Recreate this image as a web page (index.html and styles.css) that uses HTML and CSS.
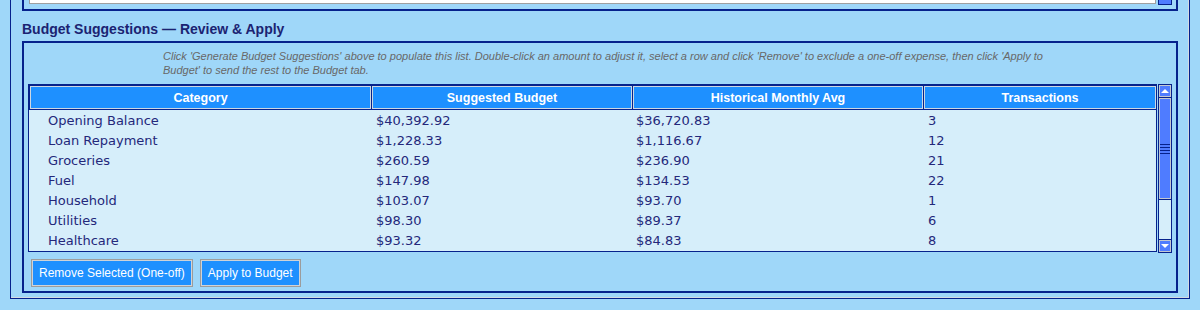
FILE: index.html
```html
<!DOCTYPE html>
<html lang="en">
<head>
  <meta charset="UTF-8">
  <title>Budget Suggestions</title>
  <link rel="stylesheet" href="styles.css">
</head>
<body>

  <div class="panel">
    <div class="prev-group">
      <div class="prev-list"></div>
      <div class="prev-scroll"></div>
    </div>

    <h4 class="group-title">Budget Suggestions — Review &amp; Apply</h4>

    <div class="group">
      <p class="hint">Click 'Generate Budget Suggestions' above to populate this list. Double-click an amount to adjust it, select a row and click 'Remove' to exclude a one-off expense, then click 'Apply to Budget' to send the rest to the Budget tab.</p>

      <div class="tree">
        <div class="tree-body">
          <div class="tree-head">
            <div>Category</div>
            <div>Suggested Budget</div>
            <div>Historical Monthly Avg</div>
            <div>Transactions</div>
          </div>
          <div class="tree-row"><span>Opening Balance</span><span>$40,392.92</span><span>$36,720.83</span><span>3</span></div>
          <div class="tree-row"><span>Loan Repayment</span><span>$1,228.33</span><span>$1,116.67</span><span>12</span></div>
          <div class="tree-row"><span>Groceries</span><span>$260.59</span><span>$236.90</span><span>21</span></div>
          <div class="tree-row"><span>Fuel</span><span>$147.98</span><span>$134.53</span><span>22</span></div>
          <div class="tree-row"><span>Household</span><span>$103.07</span><span>$93.70</span><span>1</span></div>
          <div class="tree-row"><span>Utilities</span><span>$98.30</span><span>$89.37</span><span>6</span></div>
          <div class="tree-row"><span>Healthcare</span><span>$93.32</span><span>$84.83</span><span>8</span></div>
        </div>

        <div class="scrollbar">
          <div class="scroll-btn"><i class="arrow-up"></i></div>
          <div class="scroll-thumb"><div class="grip"></div></div>
          <div class="scroll-track"></div>
          <div class="scroll-btn"><i class="arrow-down"></i></div>
        </div>
      </div>

      <div class="actions">
        <button>Remove Selected (One-off)</button>
        <button>Apply to Budget</button>
      </div>
    </div>
  </div>

</body>
</html>
```

FILE: styles.css
```css
body {
  margin: 0;
  padding: 0 10px;
  background-color: #9fd7f9;
  font-family: "Liberation Sans", Arial, sans-serif;
  height: 310px;
  overflow: hidden;
}

.panel {
  border: 1px solid #06228c;
  border-top: none;
  box-shadow: inset -1px -1px 0 #d4dbe2;
  padding: 0 11px 5px;
}

/* bottom edge of the group above, scrolled off the top */
.prev-group {
  display: flex;
  gap: 2px;
  height: 11px;
  box-sizing: border-box;
  border: 2px solid #06228c;
  border-top: none;
  padding: 0 4px 0 5px;
}

.prev-list {
  flex: 1;
  height: 3px;
  background-color: #ffffff;
  border: 1px solid #a0a0a0;
  border-top: none;
}

.prev-scroll {
  width: 12px;
  height: 4px;
  background-color: #4f7cff;
  border: 1px solid #06228c;
  border-top: none;
}

.group-title {
  margin: 9px 0 3px;
  font-size: 14px;
  line-height: 18px;
  font-weight: bold;
  color: #1b2372;
}

.group {
  border: 2px solid #06228c;
  padding: 6px 0 4px;
}

.hint {
  width: 882px;
  margin: 0 0 0 139px;
  font-size: 11px;
  line-height: 14px;
  font-style: italic;
  color: #686868;
}

.tree {
  display: flex;
  align-items: flex-start;
  gap: 1px;
  margin: 7px 4px 0;
}

.tree-body {
  flex: 1;
  height: 168px;
  box-sizing: border-box;
  overflow: hidden;
  background-color: #d6eefa;
  border: 1px solid #06228c;
}

.tree-head,
.tree-row {
  display: grid;
  grid-template-columns: 341px 260px 290px 1fr;
  column-gap: 1px;
  padding-left: 1px;
}

.tree-head {
  background-color: #06228c;
  padding-top: 1px;
  padding-bottom: 1px;
}

.tree-head div {
  height: 23px;
  box-sizing: border-box;
  background-color: #1e90ff;
  border: 1px solid #cdd7e2;
  color: white;
  font-size: 12.5px;
  font-weight: bold;
  line-height: 22px;
  text-align: center;
}

.tree-row {
  height: 20px;
  font-family: "DejaVu Sans", sans-serif;
  font-size: 13px;
  line-height: 21px;
  color: #24287a;
}

.tree-row span {
  padding-left: 4px;
  white-space: nowrap;
}

.tree-row span:first-child {
  padding-left: 18px;
}

.tree-row span:nth-child(3) {
  padding-left: 3px;
}

.scrollbar {
  width: 14px;
  height: 169px;
  box-sizing: border-box;
  border: 1px solid #06228c;
  background-color: #06228c;
  display: flex;
  flex-direction: column;
  gap: 1px;
}

.scroll-btn {
  height: 12px;
  box-sizing: border-box;
  background-color: #4f7cff;
  border: 1px solid #c4c8d0;
  display: flex;
  align-items: center;
  justify-content: center;
}

.arrow-up,
.arrow-down {
  width: 0;
  height: 0;
  border-left: 4px solid transparent;
  border-right: 4px solid transparent;
}

.arrow-up {
  border-bottom: 4px solid white;
}

.arrow-down {
  border-top: 4px solid white;
}

.scroll-thumb {
  height: 101px;
  box-sizing: border-box;
  background-color: #4f7cff;
  border: 1px solid #c4c8d0;
  display: flex;
  align-items: center;
}

.grip {
  width: 100%;
  height: 10px;
  background: repeating-linear-gradient(#06228c 0 1px, transparent 1px 3px);
}

.scroll-track {
  flex: 1;
  background-color: #d6eefa;
}

.actions {
  display: flex;
  gap: 7px;
  margin-top: 6px;
  padding-left: 7px;
}

.actions button {
  height: 28px;
  padding: 0 7px;
  background-color: #1e90ff;
  color: white;
  border: 1px solid #9c9c9c;
  box-shadow: inset 0 0 0 1px #cfd3d8;
  font-family: "Liberation Sans", Arial, sans-serif;
  font-size: 12px;
  cursor: pointer;
}
```
